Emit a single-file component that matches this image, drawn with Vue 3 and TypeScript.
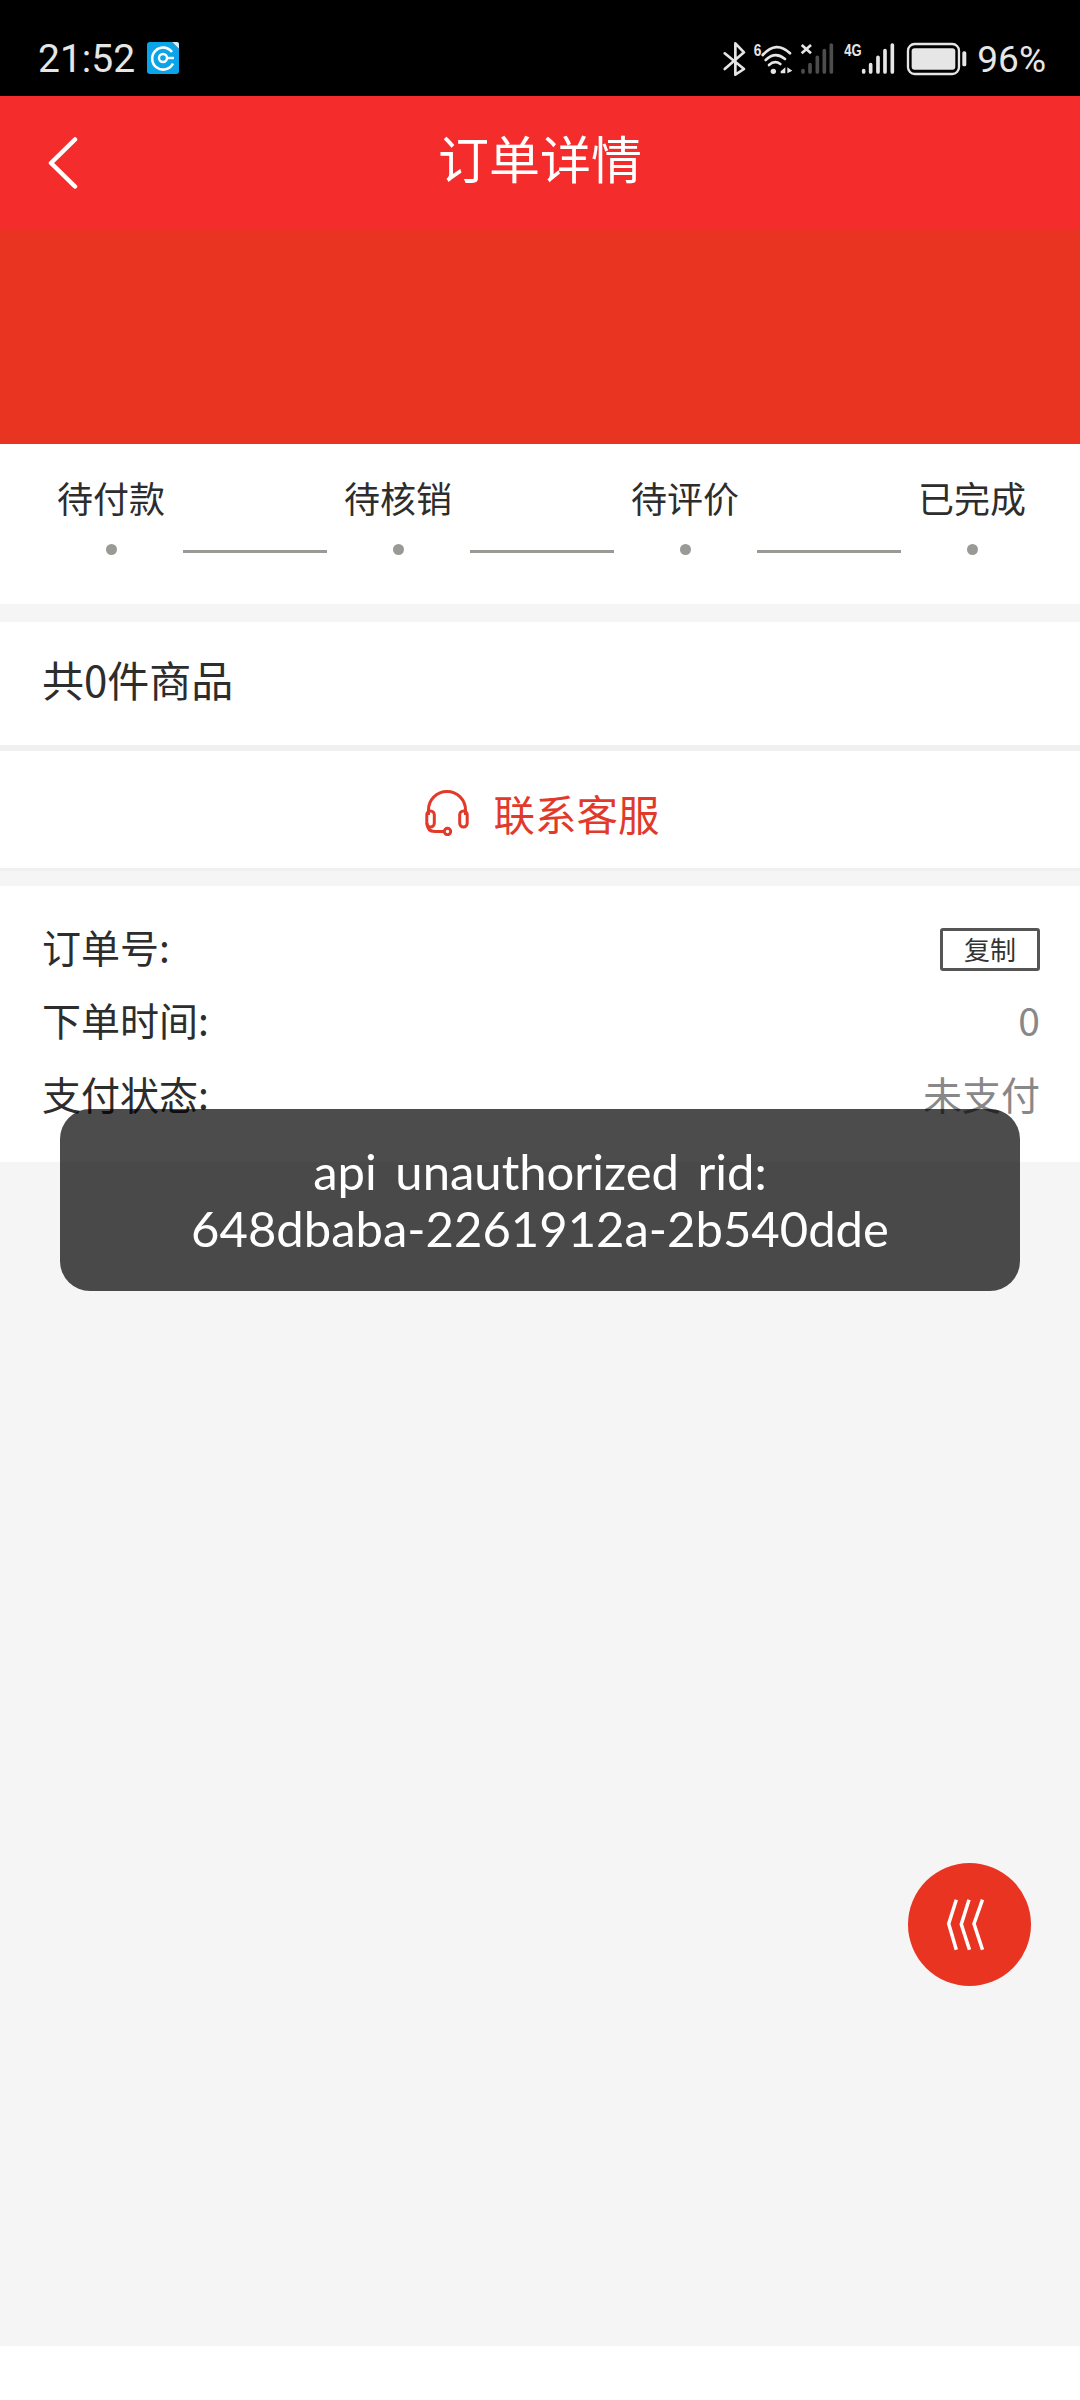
<script setup lang="ts">
const steps: string[] = ['待付款', '待核销', '待评价', '已完成']
const rows: { label: string; value: string }[] = [
  { label: '下单时间:', value: '0' },
  { label: '支付状态:', value: '未支付' },
]
</script>

<template>
  <div class="page">
    <div class="status">
      <span class="time">21:52</span>
      <svg class="logo" viewBox="0 0 32 32" width="32" height="32">
        <path d="M3 0H25L32 7V29a3 3 0 0 1-3 3H3a3 3 0 0 1-3-3V3a3 3 0 0 1 3-3Z" fill="#0ca4e8" />
        <path d="M25 0L32 7V2a2 2 0 0 0-2-2Z" fill="#cfeefb" />
        <path d="M26 21.500A11 11 0 1 1 25 10" fill="none" stroke="#fff" stroke-width="2.600" />
        <circle cx="16" cy="16" r="4" fill="none" stroke="#fff" stroke-width="2.400" />
        <path d="M20 16H27" stroke="#fff" stroke-width="2.400" />
      </svg>
      <svg class="sys" viewBox="180 100 760 140" width="253.33" height="46.67">
        <path d="M200 158L258 205L232 222V128L258 155L200 205" fill="none" stroke="#e6e6e6" stroke-width="8" stroke-linejoin="round" stroke-linecap="round" />
        <text x="287" y="165" class="mini" textLength="23" lengthAdjust="spacingAndGlyphs">6</text>
        <g fill="none" stroke="#e6e6e6" stroke-width="8" stroke-linecap="round">
          <path d="M314 163Q355 118 396 158" />
          <path d="M323 178Q352 150 381 175" />
          <path d="M333 193Q350 178 367 190" />
        </g>
        <circle cx="346" cy="212" r="8" fill="#e6e6e6" />
        <path d="M368 212L382 200V218H368ZM388 200L403 210L388 218Z" fill="#e6e6e6" />
        <path d="M431 133L459 158M459 133L431 158" stroke="#e6e6e6" stroke-width="8" />
        <g stroke="#4d4d4d" stroke-width="11" stroke-linecap="round">
          <path d="M435 210V214M456 192V214M478 170V214M499 150V214M520 133V214" />
        </g>
        <text x="559" y="166" class="mini" textLength="52" lengthAdjust="spacingAndGlyphs">4G</text>
        <g stroke="#e6e6e6" stroke-width="11" stroke-linecap="round">
          <path d="M617 210V214M638 192V214M660 170V214M681 150V214M703 133V214" />
        </g>
        <rect x="750" y="130" width="153" height="90" rx="20" fill="none" stroke="#e6e6e6" stroke-width="7" />
        <rect x="761" y="143" width="131" height="64" rx="9" fill="#e6e6e6" />
        <rect x="913" y="152" width="12" height="45" rx="5" fill="#e6e6e6" />
      </svg>
      <span class="pct">96%</span>
    </div>

    <header class="bar">
      <svg class="back" viewBox="0 0 30 52" width="30" height="52">
        <path d="M27 2.500L3 26L27 49.500" fill="none" stroke="#fff" stroke-width="4.500" stroke-linecap="round" stroke-linejoin="round" />
      </svg>
      <span class="title">订单详情</span>
    </header>

    <div class="band"></div>

    <main class="content">
      <section class="steps">
        <template v-for="(s, i) in steps" :key="s">
          <div class="step">
            <span class="step-label">{{ s }}</span>
            <span class="dot"></span>
          </div>
          <span v-if="i < steps.length - 1" class="line"></span>
        </template>
      </section>

      <section class="goods">共0件商品</section>

      <section class="service">
        <svg viewBox="0 0 44 46" width="44" height="46">
          <g fill="none" stroke="#e23a2a" stroke-width="3">
            <path d="M3.500 25V20a18.500 18.500 0 0 1 37 0V25" />
            <rect x="1.800" y="21" width="7.500" height="16" rx="3.700" />
            <rect x="34.700" y="21" width="7.500" height="16" rx="3.700" />
            <path d="M2 33Q2 41.500 10 41.500H19" />
            <circle cx="22.500" cy="41.500" r="3.200" />
          </g>
        </svg>
        <span>联系客服</span>
      </section>

      <section class="info">
        <div class="row">
          <span>订单号:</span>
          <button class="copy" type="button">复制</button>
        </div>
        <div v-for="r in rows" :key="r.label" class="row">
          <span>{{ r.label }}</span>
          <span class="val">{{ r.value }}</span>
        </div>
      </section>
    </main>

    <div class="toast">api unauthorized rid:<br />648dbaba-2261912a-2b540dde</div>

    <div class="fab">
      <svg viewBox="0 0 123 123" width="123" height="123">
        <g fill="none" stroke="#fff" stroke-width="3.500">
          <path d="M48.300 36.700L40.700 60.700L48.300 86.700" />
          <path d="M61 36.700L53.300 61.300L61.500 86.700" />
          <path d="M74.500 36.700L66 60.700L74.500 86.700" />
        </g>
      </svg>
    </div>
  </div>
</template>

<style scoped>
.page {
  position: relative;
  width: 1080px;
  height: 2400px;
  display: flex;
  flex-direction: column;
  background: #fff;
  overflow: hidden;
  font-family: "Noto Sans CJK SC", "Noto Sans", sans-serif;
  color: #2d2d2d;
}
.status {
  height: 96px;
  flex: none;
  background: #000;
  display: flex;
  align-items: center;
  color: #e6e6e6;
  font-family: Roboto, sans-serif;
  padding: 18px 34px 0 38px;
  box-sizing: border-box;
}
.time {
  font-size: 39px;
  line-height: 1;
  margin-top: 4px;
}
.logo {
  margin-left: 12px;
  margin-top: 2px;
}
.sys {
  margin-left: auto;
}
.mini {
  font-family: "Liberation Sans", sans-serif;
  font-size: 52px;
  font-weight: 700;
  fill: #e6e6e6;
}
.pct {
  font-size: 37px;
  line-height: 1;
  margin-left: 6px;
  margin-top: 4px;
}
.bar {
  position: relative;
  height: 133px;
  flex: none;
  background: #f42c2c;
  display: flex;
  align-items: center;
  justify-content: center;
}
.back {
  position: absolute;
  left: 48px;
  top: 41px;
}
.title {
  color: #fff;
  font-size: 51px;
  line-height: 1;
  margin-top: -10px;
}
.band {
  height: 215px;
  flex: none;
  background: #e93422;
}
.content {
  flex: none;
  height: 1902px;
  background: #f5f5f5;
}
.steps {
  height: 160px;
  background: #fff;
  display: flex;
  padding-left: 57px;
  box-sizing: border-box;
}
.step {
  flex: none;
  width: 108px;
  display: flex;
  flex-direction: column;
  align-items: center;
  padding-top: 28px;
}
.step-label {
  font-size: 36px;
  line-height: 50px;
  white-space: nowrap;
}
.dot {
  width: 11px;
  height: 11px;
  border-radius: 50%;
  background: #999996;
  margin-top: 22px;
}
.line {
  flex: none;
  width: 144px;
  height: 3px;
  margin: 106px 17.500px 0;
  background: #999996;
}
.goods {
  margin-top: 18px;
  height: 123px;
  background: #fff;
  padding-left: 42px;
  font-size: 42px;
  line-height: 114px;
  border-bottom: 6px solid #f0f0f0;
}
.service {
  height: 111px;
  background: #fff;
  display: flex;
  align-items: center;
  justify-content: center;
  gap: 24px;
  color: #e23a2a;
  font-size: 41.500px;
  padding: 6px 0 0 5px;
  border-bottom: 3px solid #f0f0f0;
}
.info {
  margin-top: 15px;
  height: 276px;
  background: #fff;
  padding: 23px 40px 0 42px;
  box-sizing: border-box;
}
.row {
  height: 73.500px;
  display: flex;
  align-items: center;
  justify-content: space-between;
  font-size: 39px;
}
.val {
  color: #888;
}
.copy {
  width: 100px;
  height: 43px;
  margin-top: 7px;
  padding: 0;
  box-sizing: border-box;
  border: 3px solid #555;
  border-radius: 3px;
  background: #fff;
  color: #333;
  font-family: inherit;
  font-size: 26px;
  line-height: 1;
}
.toast {
  position: absolute;
  left: 60px;
  top: 1109px;
  width: 960px;
  height: 182px;
  box-sizing: border-box;
  padding-top: 34px;
  border-radius: 30px;
  background: rgba(0, 0, 0, 0.7);
  color: #fff;
  text-align: center;
  font-family: Lato, sans-serif;
  font-size: 49px;
  line-height: 57px;
  word-spacing: 6px;
}
.fab {
  position: absolute;
  left: 908px;
  top: 1863px;
  width: 123px;
  height: 123px;
  border-radius: 50%;
  background: #e93422;
}
.fab svg {
  display: block;
}
</style>

<style>
html, body { margin: 0; padding: 0; }
</style>
